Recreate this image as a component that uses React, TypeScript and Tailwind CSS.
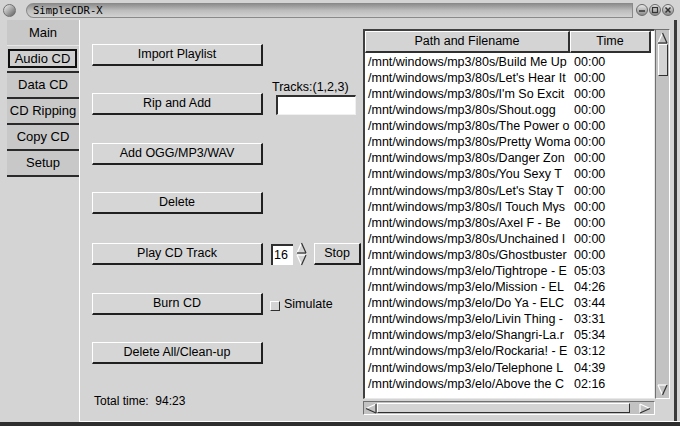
import React from "react";

const rows: [string, string][] = [
  ["/mnt/windows/mp3/80s/Build Me Up", "00:00"],
  ["/mnt/windows/mp3/80s/Let's Hear It", "00:00"],
  ["/mnt/windows/mp3/80s/I'm So Excit", "00:00"],
  ["/mnt/windows/mp3/80s/Shout.ogg", "00:00"],
  ["/mnt/windows/mp3/80s/The Power o", "00:00"],
  ["/mnt/windows/mp3/80s/Pretty Woma", "00:00"],
  ["/mnt/windows/mp3/80s/Danger Zon", "00:00"],
  ["/mnt/windows/mp3/80s/You Sexy T", "00:00"],
  ["/mnt/windows/mp3/80s/Let's Stay T", "00:00"],
  ["/mnt/windows/mp3/80s/I Touch Mys", "00:00"],
  ["/mnt/windows/mp3/80s/Axel F - Be", "00:00"],
  ["/mnt/windows/mp3/80s/Unchained I", "00:00"],
  ["/mnt/windows/mp3/80s/Ghostbuster", "00:00"],
  ["/mnt/windows/mp3/elo/Tightrope - E", "05:03"],
  ["/mnt/windows/mp3/elo/Mission - EL", "04:26"],
  ["/mnt/windows/mp3/elo/Do Ya - ELC", "03:44"],
  ["/mnt/windows/mp3/elo/Livin Thing -", "03:31"],
  ["/mnt/windows/mp3/elo/Shangri-La.r", "05:34"],
  ["/mnt/windows/mp3/elo/Rockaria! - E", "03:12"],
  ["/mnt/windows/mp3/elo/Telephone L", "04:39"],
  ["/mnt/windows/mp3/elo/Above the C", "02:16"],
];

const tabs = ["Data CD", "CD Ripping", "Copy CD", "Setup"];

function Btn({ children, className = "" }: { children: React.ReactNode; className?: string }) {
  return (
    <div
      className={`h-[22px] flex items-center justify-center bg-[#d6d6d6] border-t border-l border-t-white border-l-white border-b-2 border-r-2 border-b-[#202020] border-r-[#202020] text-[12.5px] leading-none text-black ${className}`}
    >
      {children}
    </div>
  );
}

function UpArrow() {
  return (
    <svg width="11" height="12" viewBox="0 0 11 12">
      <line x1="1" y1="11" x2="5.5" y2="1" stroke="#ffffff" strokeWidth="1.2" />
      <line x1="5.5" y1="1" x2="10" y2="11" stroke="#303030" strokeWidth="1.2" />
      <line x1="1" y1="11" x2="10" y2="11" stroke="#303030" strokeWidth="1.2" />
    </svg>
  );
}
function DownArrow() {
  return (
    <svg width="11" height="12" viewBox="0 0 11 12">
      <line x1="1" y1="1" x2="10" y2="1" stroke="#ffffff" strokeWidth="1.2" />
      <line x1="1" y1="1" x2="5.5" y2="11" stroke="#ffffff" strokeWidth="1.2" />
      <line x1="10" y1="1" x2="5.5" y2="11" stroke="#303030" strokeWidth="1.2" />
    </svg>
  );
}
function LeftArrow() {
  return (
    <svg width="12" height="11" viewBox="0 0 12 11">
      <line x1="11" y1="1" x2="1" y2="5.5" stroke="#ffffff" strokeWidth="1.2" />
      <line x1="1" y1="5.5" x2="11" y2="10" stroke="#303030" strokeWidth="1.2" />
      <line x1="11" y1="1" x2="11" y2="10" stroke="#303030" strokeWidth="1.2" />
    </svg>
  );
}
function RightArrow() {
  return (
    <svg width="12" height="11" viewBox="0 0 12 11">
      <line x1="1" y1="1" x2="11" y2="5.5" stroke="#ffffff" strokeWidth="1.2" />
      <line x1="1" y1="1" x2="1" y2="10" stroke="#ffffff" strokeWidth="1.2" />
      <line x1="11" y1="5.5" x2="1" y2="10" stroke="#303030" strokeWidth="1.2" />
    </svg>
  );
}

function WinBtn({ kind }: { kind: "min" | "max" | "close" }) {
  return (
    <div className="w-[12px] h-[12px] rounded-full bg-gradient-to-b from-[#e8e8e8] to-[#8a8a8a] border border-[#6a6a6a] flex items-center justify-center">
      <svg width="8" height="8" viewBox="0 0 8 8">
        {kind === "min" && <line x1="1" y1="5" x2="7" y2="5" stroke="#333" strokeWidth="1.5" />}
        {kind === "max" && <rect x="1.5" y="1.5" width="5" height="5" fill="none" stroke="#333" strokeWidth="1.2" />}
        {kind === "close" && (
          <>
            <line x1="1.5" y1="1.5" x2="6.5" y2="6.5" stroke="#333" strokeWidth="1.5" />
            <line x1="6.5" y1="1.5" x2="1.5" y2="6.5" stroke="#333" strokeWidth="1.5" />
          </>
        )}
      </svg>
    </div>
  );
}

export default function App() {
  return (
    <div className="w-[680px] h-[426px] bg-[#d4d4d4] flex flex-col overflow-hidden font-['Liberation_Sans',Arial,sans-serif] text-black">
      {/* Title bar */}
      <div className="h-[20px] flex items-center pl-[3px] pr-[6px]">
        <div className="w-[13px] h-[13px] rounded-full bg-gradient-to-br from-[#f0f0f0] via-[#a8a8a8] to-[#606060] border border-[#707070]" />
        <div className="ml-[10px] flex-1 h-[15px] rounded-l-full rounded-r-[6px] bg-gradient-to-b from-[#8e8e8e] via-[#bdbdbd] to-[#d2d2d2] border border-[#8a8a8a] flex items-center pl-[6px]">
          <span className="font-['DejaVu_Sans_Mono',monospace] text-[10.5px] leading-none text-black">SimpleCDR-X</span>
        </div>
        <div className="ml-[3px] flex items-center gap-[1px]">
          <WinBtn kind="min" />
          <WinBtn kind="max" />
          <WinBtn kind="close" />
        </div>
      </div>

      {/* Body */}
      <div className="flex-1 flex min-h-0">
        {/* Tabs */}
        <div className="w-[79px] pl-[7px] flex flex-col">
          <div className="w-[72px] flex flex-col text-[13px]">
            <div className="h-[26px] bg-[#c8c8c8] border-b border-b-[#e6e6e6] flex items-center justify-center">Main</div>
            <div className="h-[27px] bg-[#cfcfcf] border-b-2 border-b-[#2a2a2a] flex items-start pt-[3px] px-[1px]">
              <div className="w-[69px] h-[19px] border-2 border-[#101010] flex items-center justify-center">Audio CD</div>
            </div>
            {tabs.map((t) => (
              <div key={t} className="h-[26px] bg-[#c8c8c8] border-b-2 border-b-[#2a2a2a] flex items-center justify-center">
                {t}
              </div>
            ))}
          </div>
        </div>

        {/* Page */}
        <div className="flex-1 flex border-l border-l-white border-b border-b-white">
          {/* Middle controls */}
          <div className="w-[283px] pl-[12px] pt-[24px] flex flex-col">
            <Btn className="w-[171px]">Import Playlist</Btn>
            <div className="mt-[14px] flex items-end">
              <Btn className="w-[171px]">Rip and Add</Btn>
              <div className="ml-[13px] flex flex-col">
                <span className="text-[12.5px] leading-[14px] -ml-[4px]">Tracks:(1,2,3)</span>
                <div className="mt-[1px] w-[80px] h-[20px] bg-white border-t-2 border-l-2 border-t-[#303030] border-l-[#303030] border-b border-r border-b-[#f0f0f0] border-r-[#f0f0f0]" />
              </div>
            </div>
            <Btn className="w-[171px] mt-[28px]">Add OGG/MP3/WAV</Btn>
            <Btn className="w-[171px] mt-[27px]">Delete</Btn>
            <div className="mt-[28px] flex items-center">
              <Btn className="w-[171px]">Play CD Track</Btn>
              <div className="ml-[8px] w-[22px] h-[21px] bg-white border-t-2 border-l-2 border-t-[#303030] border-l-[#303030] text-[12.5px] leading-none flex items-center pl-[1px]">16</div>
              <div className="ml-[3px] flex flex-col">
                <UpArrow />
                <DownArrow />
              </div>
              <Btn className="ml-[7px] w-[47px]">Stop</Btn>
            </div>
            <div className="mt-[27px] flex items-center">
              <Btn className="w-[171px]">Burn CD</Btn>
              <div className="ml-[7px] mt-[4px] w-[10px] h-[10px] bg-[#d4d4d4] border-t border-l border-t-white border-l-white border-b border-r border-b-[#303030] border-r-[#303030]" />
              <span className="ml-[4px] text-[12.5px] leading-none">Simulate</span>
            </div>
            <Btn className="w-[171px] mt-[27px]">Delete All/Clean-up</Btn>
            <div className="mt-[31px] ml-[2px] text-[12px] leading-none">Total time:&nbsp; 94:23</div>
          </div>

          {/* Table */}
          <div className="w-[310px] pt-[9px] pb-[3px] flex flex-col">
            <div className="flex h-[370px]">
              <div className="w-[292px] h-full bg-white border-t-2 border-l-2 border-t-[#404040] border-l-[#404040] border-r border-b border-r-[#e8e8e8] border-b-[#e8e8e8] flex flex-col overflow-hidden">
                <div className="h-[22px] flex shrink-0 text-[12.5px]">
                  <div className="w-[205px] h-full bg-[#d4d4d4] border-t border-l border-t-white border-l-white border-b-2 border-r-2 border-b-[#303030] border-r-[#303030] flex items-center justify-center">
                    Path and Filename
                  </div>
                  <div className="w-[81px] h-full bg-[#d4d4d4] border-t border-l border-t-white border-l-white border-b-2 border-r-2 border-b-[#303030] border-r-[#303030] flex items-center justify-center">
                    Time
                  </div>
                </div>
                <div className="flex flex-col pt-[1px]">
                  {rows.map(([p, t], i) => (
                    <div key={i} className="h-[16.1px] flex items-center text-[12.5px] leading-none">
                      <div className="w-[205px] pl-[3px] overflow-hidden whitespace-nowrap">{p}</div>
                      <div className="pl-[4px] whitespace-nowrap">{t}</div>
                    </div>
                  ))}
                </div>
              </div>
              {/* vertical scrollbar */}
              <div className="w-[15px] h-full bg-[#c2c2c2] border-t border-l border-t-[#707070] border-l-[#707070] border-r border-b border-r-white border-b-white flex flex-col items-center pt-[2px] pb-[2px]">
                <UpArrow />
                <div className="w-[10px] h-[32px] bg-[#d4d4d4] border-t border-l border-t-white border-l-white border-b border-r border-b-[#303030] border-r-[#303030]" />
                <div className="flex-1" />
                <DownArrow />
              </div>
            </div>
            <div className="mt-[2px] flex">
              <div className="w-[292px] h-[14px] bg-[#c2c2c2] border-t border-l border-t-[#707070] border-l-[#707070] border-r border-b border-r-white border-b-white flex items-center pl-[1px] pr-[3px]">
                <LeftArrow />
                <div className="w-[253px] h-[10px] bg-[#d4d4d4] border-t border-l border-t-white border-l-white border-b border-r border-b-[#303030] border-r-[#303030]" />
                <div className="flex-1" />
                <RightArrow />
              </div>
            </div>
          </div>

          {/* Window right border */}
          <div className="w-[1px]" />
          <div className="w-[3px] bg-[#3a3a3a]" />
        </div>
      </div>
      <div className="h-[4px] bg-[#2e2e2e]" />
    </div>
  );
}
